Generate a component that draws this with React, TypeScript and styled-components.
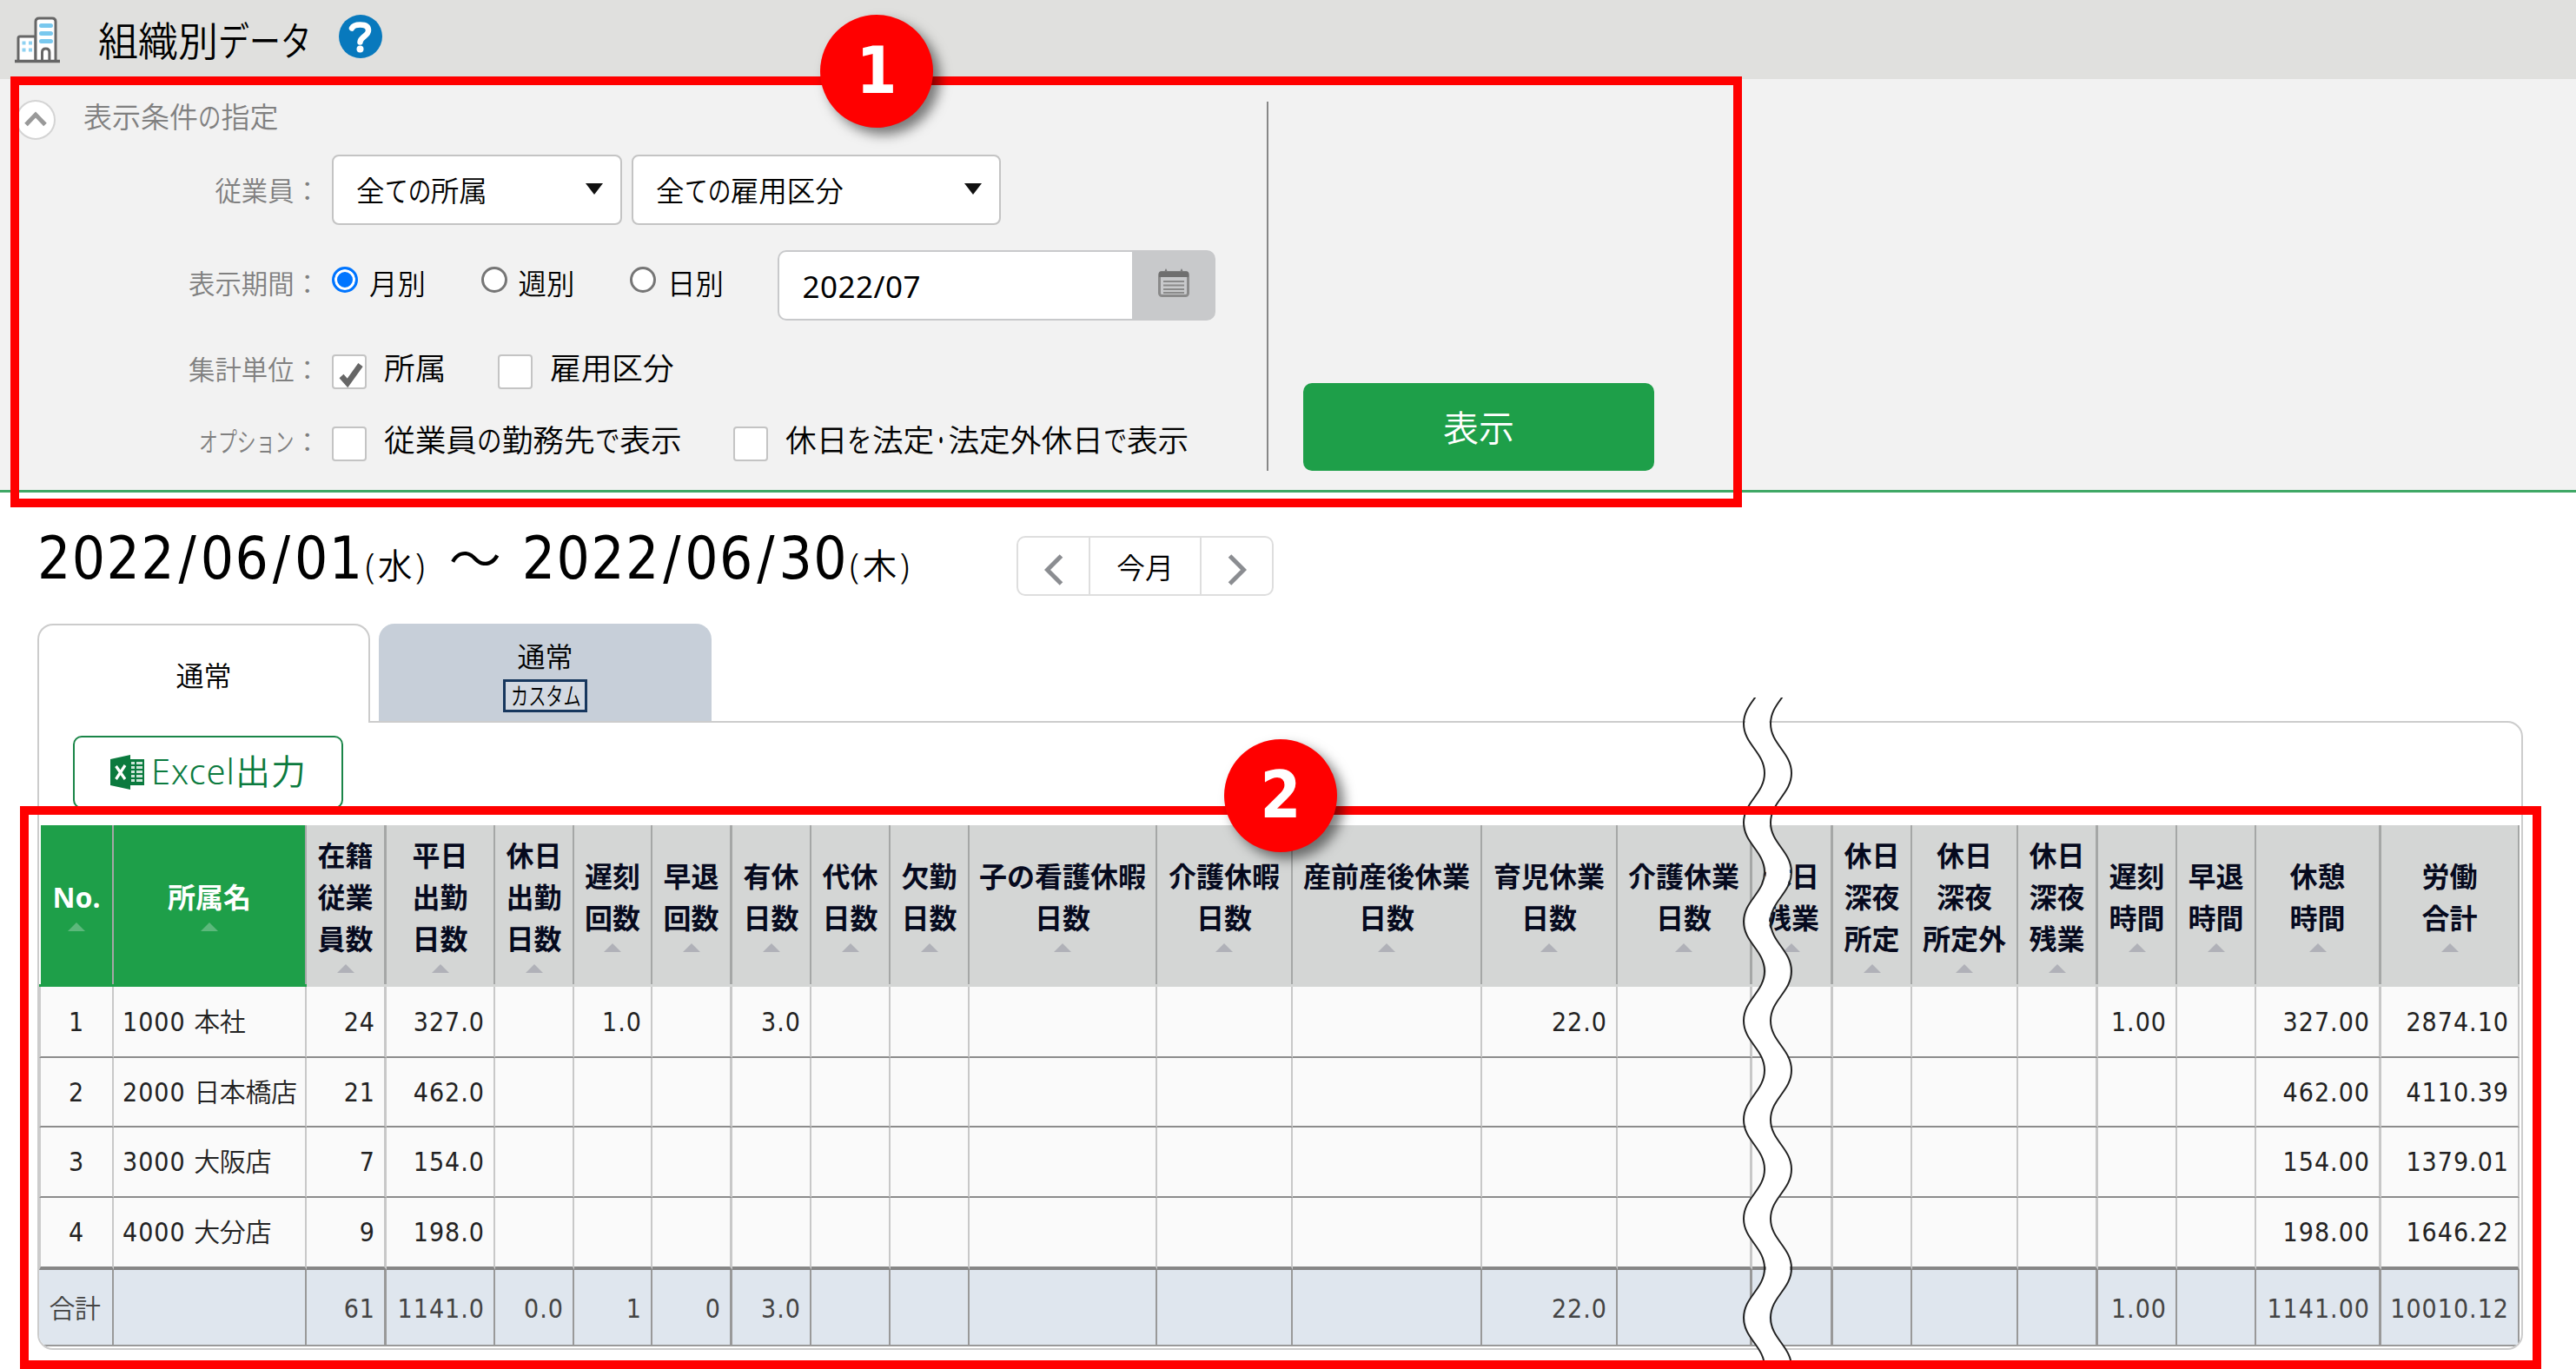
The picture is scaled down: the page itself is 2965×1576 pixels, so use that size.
import React, { useState } from 'react'
import styled, { createGlobalStyle } from 'styled-components'

type Column = {
  lines: string[]
  width: number
  thick?: boolean
  green?: boolean
}

const columns: Column[] = [
  { lines: ['No.'], width: 86, green: true },
  { lines: ['所属名'], width: 222, green: true },
  { lines: ['在籍', '従業', '員数'], width: 92, thick: true },
  { lines: ['平日', '出勤', '日数'], width: 125 },
  { lines: ['休日', '出勤', '日数'], width: 91 },
  { lines: ['遅刻', '回数'], width: 90 },
  { lines: ['早退', '回数'], width: 92, thick: true },
  { lines: ['有休', '日数'], width: 91 },
  { lines: ['代休', '日数'], width: 91 },
  { lines: ['欠勤', '日数'], width: 91 },
  { lines: ['子の看護休暇', '日数'], width: 216 },
  { lines: ['介護休暇', '日数'], width: 156 },
  { lines: ['産前産後休業', '日数'], width: 218 },
  { lines: ['育児休業', '日数'], width: 156 },
  { lines: ['介護休業', '日数'], width: 155, thick: true },
  { lines: ['休日', '残業'], width: 93, thick: true },
  { lines: ['休日', '深夜', '所定'], width: 91 },
  { lines: ['休日', '深夜', '所定外'], width: 122 },
  { lines: ['休日', '深夜', '残業'], width: 92, thick: true },
  { lines: ['遅刻', '時間'], width: 91 },
  { lines: ['早退', '時間'], width: 91 },
  { lines: ['休憩', '時間'], width: 144, thick: true },
  { lines: ['労働', '合計'], width: 159 },
]

// キーは columns の添字
type Row = { no: string; code: string; name: string; height: number; values: Record<number, string> }

const rows: Row[] = [
  {
    no: '1',
    code: '1000',
    name: '本社',
    height: 82,
    values: { 2: '24', 3: '327.0', 5: '1.0', 7: '3.0', 13: '22.0', 19: '1.00', 21: '327.00', 22: '2874.10' },
  },
  {
    no: '2',
    code: '2000',
    name: '日本橋店',
    height: 80,
    values: { 2: '21', 3: '462.0', 21: '462.00', 22: '4110.39' },
  },
  {
    no: '3',
    code: '3000',
    name: '大阪店',
    height: 81,
    values: { 2: '7', 3: '154.0', 21: '154.00', 22: '1379.01' },
  },
  {
    no: '4',
    code: '4000',
    name: '大分店',
    height: 83,
    values: { 2: '9', 3: '198.0', 21: '198.00', 22: '1646.22' },
  },
]

const totals: Record<number, string> = {
  2: '61',
  3: '1141.0',
  4: '0.0',
  5: '1',
  6: '0',
  7: '3.0',
  13: '22.0',
  19: '1.00',
  21: '1141.00',
  22: '10010.12',
}

const periods = ['月別', '週別', '日別']

const valueColumns = columns.map((_, index) => index).slice(2)

const BuildingIcon: React.FC = () => (
  <svg width="52" height="54" viewBox="0 0 52 54" fill="none">
    <path d="M4 51V25q0-2 2-2h18v28" fill="#fff" stroke="#666" strokeWidth="3" />
    <path d="M24 51V6q0-4 4-4h15q4 0 4 4v45" fill="#fff" stroke="#666" strokeWidth="3" />
    <path d="M30.500 10.500h11M30.500 19.500h11M30.500 28.500h11" stroke="#79c8ee" strokeWidth="5" strokeLinecap="round" />
    <path d="M8.500 30.500h4M16 30.500h4M8.500 38.500h4M16 38.500h4" stroke="#8fd2f2" strokeWidth="4" />
    <path d="M31.500 51V41q0-4 4.200-4t4.200 4v10" stroke="#666" strokeWidth="3" />
    <path d="M0 51.500h52" stroke="#666" strokeWidth="3.500" />
  </svg>
)

const HelpIcon: React.FC = () => (
  <svg width="50" height="50" viewBox="0 0 50 50" fill="none">
    <circle cx="25" cy="25" r="25" fill="#0879bd" />
    <path
      d="M15 15.500C16.500 12.500 20 11.500 24.500 11.500c6 0 9.500 2 9.500 6.500 0 6.500-9 7-9.500 13.500"
      stroke="#fff"
      strokeWidth="6.500"
      strokeLinecap="round"
    />
    <circle cx="24.500" cy="39.500" r="4" fill="#fff" />
  </svg>
)

const CalendarIcon: React.FC = () => (
  <svg width="36" height="34" viewBox="0 0 36 34" fill="none">
    <path d="M9 0l3 6H6zM27 0l3 6h-6z" fill="#777" />
    <rect x="1.500" y="4.500" width="33" height="27" rx="3" stroke="#8a8a8a" strokeWidth="3" />
    <path d="M1 5.500q0-2 2-2h30q2 0 2 2V10H1z" fill="#6f6f6f" />
    <path d="M6 15h24M6 19.500h24M6 24h24M6 28h24" stroke="#8a8a8a" strokeWidth="2.200" />
  </svg>
)

const ExcelIcon: React.FC = () => (
  <svg width="40" height="40" viewBox="0 0 40 40" fill="none">
    <path d="M22 5h17v30H22z" fill="#0b7a3e" />
    <path
      d="M24 8h4v3h-4zM30 8h7v3h-7zM24 13h4v3h-4zM30 13h7v3h-7zM24 18h4v3h-4zM30 18h7v3h-7zM24 23h4v3h-4zM30 23h7v3h-7zM24 28h4v3h-4zM30 28h7v3h-7z"
      fill="#cfe6d9"
    />
    <path d="M0 5l23-5v40L0 35z" fill="#0b7a3e" />
    <path d="M6.500 13l10.500 15M17 12L6.500 28" stroke="#fff" strokeWidth="3.200" />
  </svg>
)

const CheckMark: React.FC = () => (
  <svg width="32" height="30" viewBox="0 0 32 30" fill="none">
    <path d="M5 17l7 8L27 4" stroke="#666" strokeWidth="6.500" />
  </svg>
)

const WAVE_HALF = 57

const wavePath = (left: number, right: number) => {
  const k = WAVE_HALF * 0.42
  let d = `M${right} 0`
  for (let i = 0; i < 14; i++) {
    const from = i % 2 === 0 ? right : left
    const to = i % 2 === 0 ? left : right
    const y = i * WAVE_HALF
    d += `C${from} ${y + k} ${to} ${y + WAVE_HALF - k} ${to} ${y + WAVE_HALF}`
  }
  return d
}

// 列の省略を示す波線
const BreakMark: React.FC = () => (
  <BreakSvg width="60" height="764" viewBox="0 27 60 764" fill="none">
    <path d={wavePath(17.5, 41.5)} stroke="#fff" strokeWidth="27" />
    <path d={wavePath(2, 26)} stroke="#222" strokeWidth="2" />
    <path d={wavePath(33, 57)} stroke="#222" strokeWidth="2" />
  </BreakSvg>
)

const DateLabel: React.FC<{ date: string; weekDay: string }> = ({ date, weekDay }) => (
  <>
    <DateText>
      {date.split('/').map((part, index) => (
        <React.Fragment key={index}>
          {index > 0 && <Slash>/</Slash>}
          {part}
        </React.Fragment>
      ))}
    </DateText>
    <WeekDay>({weekDay})</WeekDay>
  </>
)

const App: React.FC = () => {
  const [period, setPeriod] = useState('月別')
  const [checked, setChecked] = useState<Record<string, boolean>>({ section: true })

  const toggle = (key: string) => setChecked({ ...checked, [key]: !checked[key] })

  return (
    <Page>
      <GlobalStyle />
      <TitleBar>
        <BuildingIcon />
        <Title>
          組織別
          <Kana count={3} scale={0.78}>
            データ
          </Kana>
        </Title>
        <HelpButton>
          <HelpIcon />
        </HelpButton>
      </TitleBar>

      <Filter>
        <Form>
          <FormHead>
            <CollapseButton>
              <svg width="26" height="18" viewBox="0 0 26 18" fill="none">
                <path d="M2 15.500L13 4l11 11.500" stroke="#999" strokeWidth="5" />
              </svg>
            </CollapseButton>
            <FormTitle>
              表示条件
              <Kana count={1} scale={0.8}>
                の
              </Kana>
              指定
            </FormTitle>
          </FormHead>
          <FormRow height={80}>
            <Label offset={2}>従業員：</Label>
            <Select width={334}>
              <span>
                全
                <Kana count={2} scale={0.82}>
                  ての
                </Kana>
                所属
              </span>
              <Caret />
            </Select>
            <Select width={425}>
              <span>
                全
                <Kana count={2} scale={0.82}>
                  ての
                </Kana>
                雇用区分
              </span>
              <Caret />
            </Select>
          </FormRow>
          <FormRow height={80} gap={30}>
            <Label offset={-1}>表示期間：</Label>
            {periods.map((label) => (
              <RadioItem key={label} onClick={() => setPeriod(label)}>
                <Radio selected={period === label} />
                {label}
              </RadioItem>
            ))}
            <DateField>
              <DateInput>2022/07</DateInput>
              <DateButton>
                <CalendarIcon />
              </DateButton>
            </DateField>
          </FormRow>
          <FormRow height={40} gap={40}>
            <Label offset={-2}>集計単位：</Label>
            <CheckItem width={191} onClick={() => toggle('section')}>
              <CheckBox>{checked.section && <CheckMark />}</CheckBox>
              <CheckText>所属</CheckText>
            </CheckItem>
            <CheckItem onClick={() => toggle('employment')}>
              <CheckBox>{checked.employment && <CheckMark />}</CheckBox>
              <CheckText>雇用区分</CheckText>
            </CheckItem>
          </FormRow>
          <FormRow height={40} gap={43}>
            <Label offset={-2}>
              <Kana count={5} scale={0.72}>
                オプション
              </Kana>
              ：
            </Label>
            <CheckItem width={462} onClick={() => toggle('workplace')}>
              <CheckBox>{checked.workplace && <CheckMark />}</CheckBox>
              <CheckText>
                従業員
                <Kana count={1} scale={0.8}>
                  の
                </Kana>
                勤務先
                <Kana count={1} scale={0.8}>
                  で
                </Kana>
                表示
              </CheckText>
            </CheckItem>
            <CheckItem onClick={() => toggle('holiday')}>
              <CheckBox>{checked.holiday && <CheckMark />}</CheckBox>
              <CheckText>
                休日
                <Kana count={1} scale={0.8}>
                  を
                </Kana>
                法定
                <Kana count={1} scale={0.45}>
                  ・
                </Kana>
                法定外休日
                <Kana count={1} scale={0.76}>
                  で
                </Kana>
                表示
              </CheckText>
            </CheckItem>
          </FormRow>
        </Form>
        <Divider />
        <SubmitButton>表示</SubmitButton>
      </Filter>

      <DateBar>
        <DateRange>
          <DateLabel date="2022/06/01" weekDay="水" />
          <Tilde>～</Tilde>
          <DateLabel date="2022/06/30" weekDay="木" />
        </DateRange>
        <MonthNav>
          <NavButton width={81}>
            <svg width="22" height="36" viewBox="0 0 22 36" fill="none">
              <path d="M19.500 2L3.500 18l16 16" stroke="#8b8d91" strokeWidth="5" />
            </svg>
          </NavButton>
          <NavButton width={128}>今月</NavButton>
          <NavButton width={83}>
            <svg width="22" height="36" viewBox="0 0 22 36" fill="none">
              <path d="M2.500 2l16 16-16 16" stroke="#8b8d91" strokeWidth="5" />
            </svg>
          </NavButton>
        </MonthNav>
      </DateBar>

      <Tabs>
        <Tab active>通常</Tab>
        <Tab>
          通常
          <CustomTag>
            <Kana count={4} scale={0.72}>
              カスタム
            </Kana>
          </CustomTag>
        </Tab>
      </Tabs>

      <Panel>
        <ExcelButton>
          <ExcelIcon />
          <ExcelText>Excel出力</ExcelText>
        </ExcelButton>
        <Table>
          <colgroup>
            {columns.map((column, index) => (
              <col key={index} style={{ width: column.width }} />
            ))}
          </colgroup>
          <thead>
            <tr>
              {columns.map((column, index) => (
                <HeadCell key={index} green={column.green}>
                  <HeadInner thick={column.thick} first={index === 0}>
                    {column.lines.map((line) => (
                      <div key={line}>{line}</div>
                    ))}
                    <SortMark green={column.green} />
                  </HeadInner>
                </HeadCell>
              ))}
            </tr>
          </thead>
          <tbody>
            {rows.map((row, rowIndex) => (
              <BodyRow key={row.no} height={row.height} last={rowIndex === rows.length - 1}>
                <Cell align="center" first>
                  {row.no}
                </Cell>
                <Cell align="left">
                  {row.code} <SectionName>{row.name}</SectionName>
                </Cell>
                {valueColumns.map((index) => (
                  <Cell key={index} thick={columns[index].thick}>
                    {row.values[index]}
                  </Cell>
                ))}
              </BodyRow>
            ))}
            <TotalRow>
              <Cell align="center" first>
                <SectionName>合計</SectionName>
              </Cell>
              <Cell />
              {valueColumns.map((index) => (
                <Cell key={index} thick={columns[index].thick}>
                  {totals[index]}
                </Cell>
              ))}
            </TotalRow>
          </tbody>
        </Table>
      </Panel>

      <BreakMark />
      <Frame x={12} y={88} width={1993} height={496} />
      <Frame x={23} y={928} width={2902} height={648} />
      <Badge x={944} y={17}>
        1
      </Badge>
      <Badge x={1409} y={851}>
        2
      </Badge>
    </Page>
  )
}

export default App

const GlobalStyle = createGlobalStyle`
  * {
    box-sizing: border-box;
  }

  body {
    margin: 0;
    background: #fff;
    color: #000;
    font-family: 'Noto Sans', 'Noto Sans CJK JP', sans-serif;
    font-weight: 350;
  }

  svg {
    display: block;
    flex-shrink: 0;
  }
`

const Page = styled.div`
  position: relative;
  width: 2965px;
  height: 1576px;
  overflow: hidden;
`

// かなは漢字より幅を詰めて表示する
const Kana = styled.span<{ count: number; scale: number }>`
  display: inline-block;
  transform: scaleX(${({ scale }) => scale});
  transform-origin: left center;
  margin-right: ${({ count, scale }) => count * (scale - 1)}em;
`

const TitleBar = styled.header`
  display: flex;
  align-items: center;
  height: 91px;
  padding: 0 0 0 17px;
  background: #e0e0de;
`

const Title = styled.h1`
  margin: 0 31px 0 44px;
  font-size: 46px;
  font-weight: 350;
  line-height: 60px;
`

const HelpButton = styled.div`
  padding-bottom: 8px;
`

const Filter = styled.section`
  display: flex;
  align-items: flex-end;
  height: 476px;
  padding-bottom: 22px;
  background: #f2f2f2;
  border-bottom: 3px solid #3fa866;
`

const Form = styled.div`
  width: 1458px;
  height: 427px;
`

const FormHead = styled.div`
  display: flex;
  align-items: center;
  height: 46px;
  padding-left: 18px;
  margin-bottom: 17px;
`

const CollapseButton = styled.div`
  display: flex;
  justify-content: center;
  align-items: center;
  width: 46px;
  height: 46px;
  padding-bottom: 2px;
  border: 2px solid #d4d4d4;
  border-radius: 50%;
  background: #fff;
`

const FormTitle = styled.div`
  margin-left: 32px;
  padding-bottom: 6px;
  color: #808080;
  font-size: 33px;
  line-height: 40px;
`

const FormRow = styled.div<{ height: number; gap?: number }>`
  display: flex;
  align-items: center;
  height: ${({ height }) => height}px;
  margin-top: ${({ gap }) => gap ?? 0}px;
`

const Label = styled.div<{ offset: number }>`
  width: 369px;
  margin-right: 13px;
  padding-top: ${({ offset }) => Math.max(offset, 0) * 2}px;
  padding-bottom: ${({ offset }) => Math.max(-offset, 0) * 2}px;
  color: #808080;
  font-size: 30.400px;
  line-height: 40px;
  text-align: right;
`

const Select = styled.div<{ width: number }>`
  display: flex;
  justify-content: space-between;
  align-items: center;
  width: ${({ width }) => width}px;
  height: 81px;
  margin-right: 11px;
  padding: 0 20px 0 26px;
  border: 2px solid #c4c4c4;
  border-radius: 8px;
  background: #fff;
  font-size: 32.500px;
`

const Caret = styled.i`
  border: 10px solid transparent;
  border-top: 13px solid #111;
  border-bottom: 0;
  margin-top: -1px;
`

const RadioItem = styled.div`
  display: flex;
  align-items: center;
  width: 171.500px;
  padding-bottom: 7px;
  font-size: 32.400px;
  gap: 13px;
`

const Radio = styled.i<{ selected: boolean }>`
  width: 30px;
  height: 30px;
  margin-top: -5px;
  border: 3px solid ${({ selected }) => (selected ? '#0075ff' : '#767676')};
  border-radius: 50%;
  background: ${({ selected }) => (selected ? '#0075ff' : '#fff')};
  box-shadow: inset 0 0 0 3px #fff;
`

const DateField = styled.div`
  display: flex;
  width: 504px;
  height: 81px;
  margin-left: -2px;
`

const DateInput = styled.div`
  flex: 1;
  display: flex;
  align-items: center;
  padding: 3px 0 0 27px;
  border: 2px solid #c8c9cb;
  border-right: none;
  border-radius: 10px 0 0 10px;
  background: #fff;
  font-size: 35px;
  font-weight: 400;
  letter-spacing: 0.500px;
`

const DateButton = styled.div`
  display: flex;
  justify-content: center;
  align-items: center;
  width: 96px;
  padding-bottom: 5px;
  border-radius: 0 10px 10px 0;
  background: #c8c9cb;
`

const CheckItem = styled.div<{ width?: number }>`
  display: flex;
  align-items: center;
  gap: 20px;
  width: ${({ width }) => (width ? `${width}px` : 'auto')};
`

const CheckBox = styled.span`
  display: flex;
  justify-content: flex-end;
  align-items: flex-end;
  flex-shrink: 0;
  width: 40px;
  height: 40px;
  border: 2px solid #c4c4c4;
  border-radius: 4px;
  background: #fff;
`

const CheckText = styled.span`
  padding-bottom: 10px;
  font-size: 35.700px;
  line-height: 40px;
  white-space: nowrap;
`

const Divider = styled.div`
  width: 2px;
  height: 425px;
  background: #888;
`

const SubmitButton = styled.button`
  width: 404px;
  height: 101px;
  margin-left: 40px;
  padding: 0 0 3px;
  border: none;
  border-radius: 10px;
  background: #1e9f49;
  color: #fff;
  font-family: inherit;
  font-size: 41px;
  font-weight: 350;
`

const DateBar = styled.div`
  display: flex;
  height: 69px;
  margin-top: 50px;
  padding-left: 43px;
`

const DateRange = styled.div`
  display: flex;
  align-items: baseline;
  width: 1127px;
  margin-top: -8px;
  line-height: 69px;
`

const DateText = styled.span`
  font-family: 'DejaVu Sans Condensed', 'DejaVu Sans', sans-serif;
  font-stretch: condensed;
  font-size: 67px;
  letter-spacing: 1.400px;
`

const Slash = styled.span`
  margin: 0 3.500px;
`

const WeekDay = styled.span`
  margin-left: 2px;
  font-size: 39.500px;
  letter-spacing: 3.600px;
  line-height: 1;
`

const Tilde = styled.span`
  width: 108px;
  font-size: 60px;
  line-height: 1;
  text-align: center;
`

const MonthNav = styled.div`
  display: flex;
  height: 69px;
  border: 2px solid #dedede;
  border-radius: 10px;
`

const NavButton = styled.div<{ width: number }>`
  display: flex;
  justify-content: center;
  align-items: center;
  width: ${({ width }) => width}px;
  font-size: 33px;

  & + & {
    border-left: 2px solid #dedede;
  }

  svg {
    margin-top: 8px;
  }
`

const Tabs = styled.div`
  position: relative;
  z-index: 1;
  display: flex;
  gap: 10px;
  height: 114px;
  margin: 32px 0 0 43px;
`

const Tab = styled.div<{ active?: boolean }>`
  display: flex;
  flex-direction: column;
  justify-content: center;
  align-items: center;
  width: 383px;
  height: ${({ active }) => (active ? 114 : 112)}px;
  padding-top: 4px;
  border: 2px solid ${({ active }) => (active ? '#ccc' : '#c7cfd9')};
  border-bottom: none;
  border-radius: 18px 18px 0 0;
  background: ${({ active }) => (active ? '#fff' : '#c7cfd9')};
  font-size: 32px;
  line-height: 44px;
`

const CustomTag = styled.div`
  width: 97px;
  height: 38px;
  margin-top: 4px;
  padding-left: 6px;
  border: 3px solid #17375e;
  background: #d3d9e2;
  font-size: 28px;
  line-height: 32px;
  white-space: nowrap;
`

const Panel = styled.section`
  width: 2861px;
  height: 724px;
  margin: -2px 0 0 43px;
  border: 2px solid #ccc;
  border-radius: 0 18px 18px 18px;
  background: #fff;
  overflow: hidden;
`

const ExcelButton = styled.div`
  display: flex;
  align-items: center;
  gap: 7px;
  width: 311px;
  height: 84px;
  margin: 15px 0 19px 39px;
  padding-left: 41px;
  border: 2px solid #1a8548;
  border-radius: 10px;
`

const ExcelText = styled.span`
  padding-bottom: 3px;
  color: #0b7a3e;
  font-size: 40px;
  letter-spacing: 1px;
  line-height: 50px;
  white-space: nowrap;
`

const Table = styled.table`
  width: 2855px;
  table-layout: fixed;
  border-collapse: separate;
  border-spacing: 0;
`

const HeadCell = styled.th<{ green?: boolean }>`
  height: 186px;
  padding: 0;
  vertical-align: top;
  border-bottom: 3px solid ${({ green }) => (green ? '#1e9f49' : '#d4d6d5')};
  background: ${({ green }) => (green ? '#1e9f49' : '#d4d6d5')};
  color: ${({ green }) => (green ? '#fff' : '#060a1e')};
  font-size: 32px;
  font-weight: 700;
  line-height: 48px;
  white-space: nowrap;
`

const HeadInner = styled.div<{ thick?: boolean; first: boolean }>`
  display: flex;
  flex-direction: column;
  justify-content: center;
  align-items: center;
  height: 183px;
  padding-bottom: 2px;
  border-left: ${({ first }) => (first ? '2px solid #fff' : 'none')};
  border-right: ${({ thick }) => (thick ? 3 : 2)}px solid #a5a7a6;
`

const SortMark = styled.i<{ green?: boolean }>`
  margin-top: 5px;
  border: 10px solid transparent;
  border-top: 0;
  border-bottom: 10px solid ${({ green }) => (green ? '#5cb87b' : '#b0b1b8')};
`

const Cell = styled.td<{ align?: string; first?: boolean; thick?: boolean }>`
  padding: 1px 10px 0;
  border-left: ${({ first }) => (first ? '2px solid #ccc' : 'none')};
  border-right: ${({ thick }) => (thick ? 3 : 2)}px solid #c8c8c8;
  text-align: ${({ align }) => align ?? 'right'};
  line-height: 40px;
  white-space: nowrap;
`

const BodyRow = styled.tr<{ height: number; last: boolean }>`
  background: #fafafa;
  color: #222;
  font-family: 'DejaVu Sans Condensed', 'DejaVu Sans', 'Noto Sans CJK JP', sans-serif;
  font-stretch: condensed;
  font-size: 30px;
  letter-spacing: 1px;

  td {
    height: ${({ height }) => height}px;
    border-bottom: ${({ last }) => (last ? '4px solid #868686' : '2px solid #8c8c8c')};
  }
`

const TotalRow = styled.tr`
  background: #dfe6ee;
  color: #444;
  font-family: 'DejaVu Sans Condensed', 'DejaVu Sans', 'Noto Sans CJK JP', sans-serif;
  font-stretch: condensed;
  font-size: 30px;
  letter-spacing: 1px;

  td {
    height: 88px;
    padding-top: 3px;
    border-bottom: 2px solid #999;
    border-right-color: #999;
  }

  td:first-child {
    padding: 3px 12px 0 8px;
    border-left-color: #dfe6ee;
  }
`

const SectionName = styled.span`
  letter-spacing: -0.400px;
`

const BreakSvg = styled.svg`
  position: absolute;
  left: 2005px;
  top: 803px;
`

const Frame = styled.div<{ x: number; y: number; width: number; height: number }>`
  position: absolute;
  left: ${({ x }) => x}px;
  top: ${({ y }) => y}px;
  width: ${({ width }) => width}px;
  height: ${({ height }) => height}px;
  border: 10px solid #f00;
  pointer-events: none;
`

const Badge = styled.div<{ x: number; y: number }>`
  position: absolute;
  left: ${({ x }) => x}px;
  top: ${({ y }) => y}px;
  display: flex;
  justify-content: center;
  align-items: center;
  width: 130px;
  height: 130px;
  padding-bottom: 2px;
  border-radius: 50%;
  background: #f00;
  box-shadow: 8px 8px 14px rgba(0, 0, 0, 0.5);
  color: #fff;
  font-family: 'DejaVu Sans Condensed', 'DejaVu Sans', sans-serif;
  font-stretch: condensed;
  font-size: 75px;
  font-weight: 700;
`
